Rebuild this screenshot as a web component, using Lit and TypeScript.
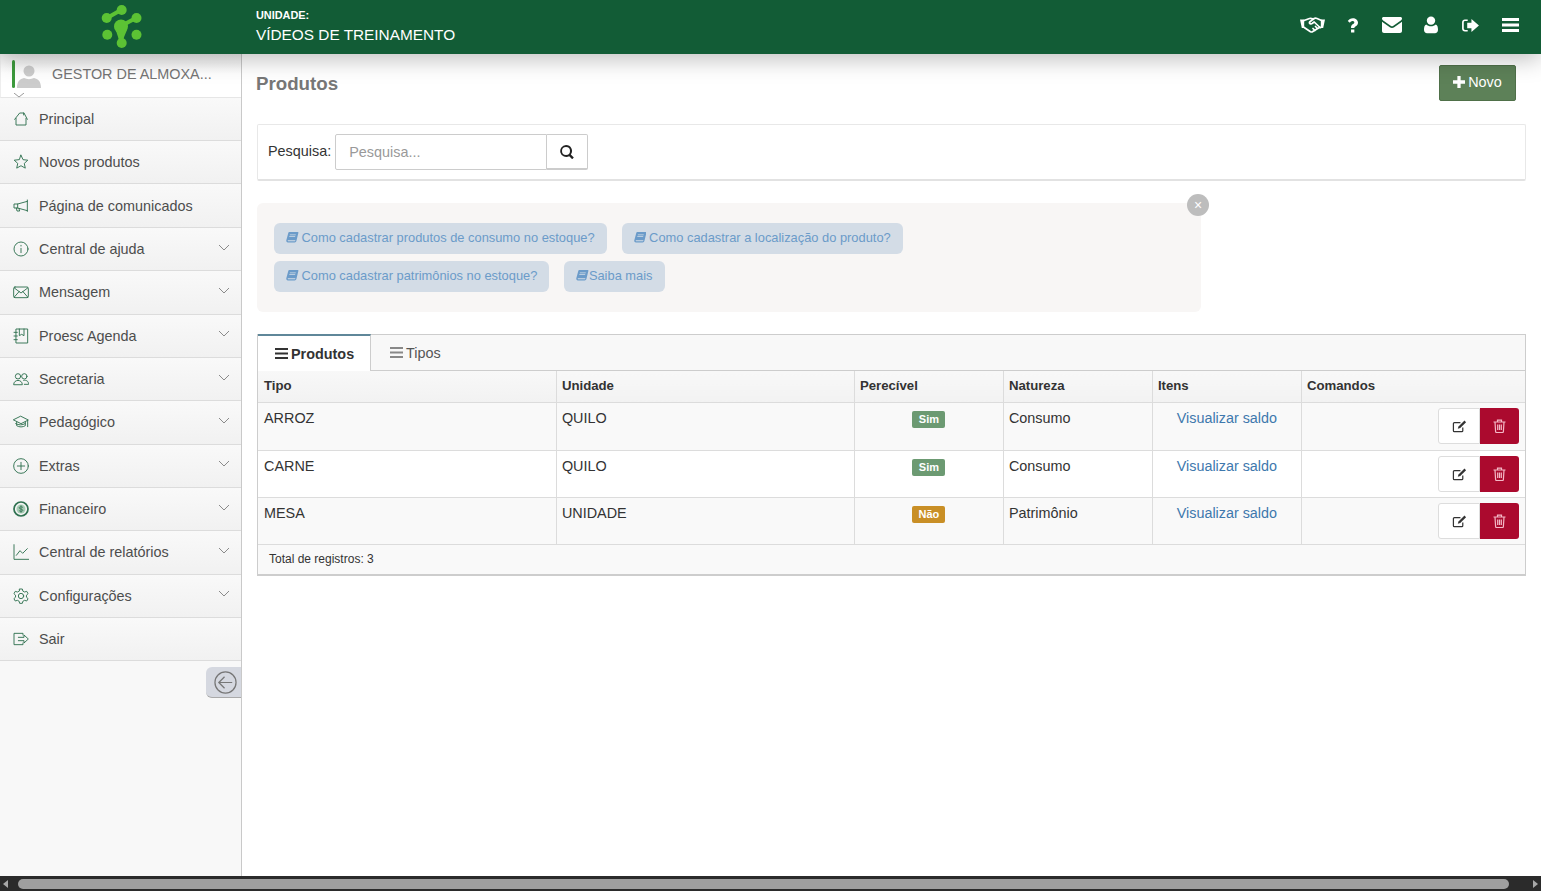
import { LitElement, html, css, svg } from "lit";
import { customElement } from "lit/decorators.js";

const ic = (body: unknown, vb = "0 0 24 24") => html`<svg class="i" viewBox=${vb} fill="none" stroke="currentColor" stroke-width="1.5" stroke-linecap="round" stroke-linejoin="round">${body}</svg>`;

const menu: [string, unknown, boolean][] = [
  ["Principal", svg`<path d="M4.500 11v10h15V11M2.500 12.500 10 3h6.500l5 9.500"/><path d="M16 3v3"/>`, false],
  ["Novos produtos", svg`<path d="m12 1.800 3 6.700 7.200.8-5.300 4.800 1.500 7.100L12 17.600l-6.400 3.600 1.500-7.100-5.300-4.800L9 8.500z"/>`, false],
  ["Página de comunicados", svg`<path d="M21.500 3v17M21.500 5 7 9H1.500v6H7l14.500 4M7 9v6M5 15l1 4.500h4L9 16"/>`, false],
  ["Central de ajuda", svg`<circle cx="12" cy="12" r="10.500"/><path d="M12 11v6.500M12 6.500v1"/>`, true],
  ["Mensagem", svg`<rect x="1" y="4.500" width="22" height="16" rx="2"/><path d="m2 6 10 7.500L22 6M2 19.500l7.500-8.500M22 19.500 14.500 11"/>`, true],
  ["Proesc Agenda", svg`<path d="M5 1.500h17v21H5zM1.500 6.500h5M1.500 12h5M1.500 17.500h5M9.500 1.500v10l3.500-2 3.500 2v-10"/>`, true],
  ["Secretaria", svg`<circle cx="7.500" cy="8" r="4"/><circle cx="17" cy="8" r="4"/><path d="M1 20c0-8 13-8 13 0zM16 14c4-1 7.500 1.500 7.500 6H17"/>`, true],
  ["Pedagógico", svg`<path d="m12 3.500 11 5.500-11 5.500L1 9zM5.500 12v5.500c3.500 2.500 9.500 2.500 13 0V12M22 10v9"/><path d="M4 14.500c4.500 2.500 10 2.500 14 0"/>`, true],
  ["Extras", svg`<circle cx="12" cy="12" r="11"/><path d="M12 6.500v11M6.500 12h11"/>`, true],
  ["Financeiro", svg`<circle cx="12" cy="12" r="10.500" stroke-width="2.600"/><circle cx="12" cy="12" r="6.800" fill="#a8ccb5" stroke="none"/><path d="M14.800 9.500c-1-1.300-5.600-1.300-5.600.8s5.600 1.500 5.600 3.600-4.600 2.100-5.600.7M12 7v10" stroke-width="1.200"/>`, true],
  ["Central de relatórios", svg`<path d="M1.500 1v22h22.500M5 17l5.500-7 4 4 7-7"/>`, true],
  ["Configurações", svg`<path d="M10 1.500h4l.800 3.200 2.600 1.300 3.200-1 2 3.500-2.400 2.300v3l2.400 2.200-2 3.500-3.200-1-2.600 1.400-.800 3.100h-4l-.800-3.100-2.600-1.400-3.200 1-2-3.500 2.400-2.200v-3L1.400 8.500l2-3.500 3.200 1 2.600-1.300z"/><circle cx="12" cy="12" r="4"/>`, true],
  ["Sair", svg`<path d="M15 6V3.500H1.500v17H15V18M8 9.500h8.500V6l6.500 6-6.500 6v-3.500H8"/>`, false],
];

const rows = [
  ["ARROZ", "QUILO", "Sim", "Consumo", 48],
  ["CARNE", "QUILO", "Sim", "Consumo", 47],
  ["MESA", "UNIDADE", "Não", "Patrimônio", 47],
];

const book = html`<svg class="book" viewBox="0 0 16 14"><path fill="currentColor" d="M4 0h11c.800 0 1 .500.800 1.200L13.300 11.500c-.300 1.200-1 1.800-2.300 1.800H2.500C1 13.300 0 12 .400 10.500L3 1C3.200.400 3.500 0 4 0zm1 3-.200 1h7.500l.300-1zm-.700 2.500-.200 1h7.500l.300-1zM2.300 10.500c-.300.800.100 1.300.800 1.300h8c.400 0 .700-.300.800-.700l.100-.600z" fill-rule="evenodd"/></svg>`;

const edit = html`<svg class="act" viewBox="0 0 16 14"><path fill="none" stroke="currentColor" stroke-width="1.300" d="M11.500 8.500V12a1 1 0 0 1-1 1h-8a1 1 0 0 1-1-1V4.500a1 1 0 0 1 1-1H9"/><path fill="currentColor" d="M13.300 1.200l1.700 1.700L8.800 9.200 6.200 10l.700-2.600z"/></svg>`;
const trash = html`<svg class="act" viewBox="0 0 14 14"><path fill="none" stroke="currentColor" stroke-width="1.200" d="M1 3h12M2.500 3l.600 9.500c0 .500.400 1 1 1h5.800c.600 0 1-.500 1-1l.600-9.500M5 3V1.200h4V3M5.200 5.500v5.500M7 5.500v5.500M8.800 5.500v5.500"/></svg>`;

@customElement("app-root")
export class AppRoot extends LitElement {
  static styles = css`
    :host { display: flex; flex-direction: column; height: 100vh; overflow: hidden; font-family: "Liberation Sans", Arial, sans-serif; font-size: 14.4px; color: #333; background: #fff; }
    * { box-sizing: border-box; }
    .top { height: 54px; flex: none; background: #125c36; color: #fff; display: flex; align-items: center; box-shadow: 0 4px 24px rgba(0,0,0,.28); position: relative; z-index: 2; }
    .logo { width: 242px; display: flex; justify-content: center; }
    .logo svg { width: 44px; height: 50px; }
    .unit { flex: 1; padding-left: 14px; }
    .unit small { display: block; font-size: 10.900px; font-weight: 700; line-height: 12px; margin-top: -3px; }
    .unit span { display: block; font-size: 15.360px; line-height: 17px; margin-top: 5px; }
    .tools { display: flex; align-items: center; padding-right: 11px; }
    .tool { width: 39.500px; display: flex; justify-content: center; align-items: center; height: 24px; margin-top: -4px; }
    .tool svg { display: block; fill: #fff; }
    .mid { flex: 1; display: flex; min-height: 0; }
    .side { width: 242px; flex: none; background: #f8f8f8; border-right: 1px solid #c9c9c9; display: flex; flex-direction: column; }
    .user { height: 43.800px; display: flex; align-items: center; padding: 0 0 3px 12px; background: linear-gradient(#f0f0f0, #fff 45%); border-left: 1px solid #eee; border-bottom: 1px solid #e6e6e6; position: relative; color: #757575; }
    .user .bar { width: 3px; height: 28px; background: #3d9a3d; border-radius: 2px; flex: none; margin-left: -1px; }
    .user svg.av { width: 24px; height: 24px; margin: 5px 0 0 2px; flex: none; }
    .user .nm { margin-left: 11px; white-space: nowrap; font-size: 14.400px; }
    .user svg.ch { position: absolute; left: 12px; top: 39px; width: 12px; height: 5px; color: #999; }
    .item { height: 43.350px; flex: none; display: flex; align-items: center; padding: 0 11px 0 13px; background: linear-gradient(#f9f9f9, #f1f1f1); border-bottom: 1px solid #dcdcdc; color: #4d4d4d; }
    .item .i { width: 16px; height: 16px; color: #2f7150; flex: none; stroke-width: 1.400; }
    .item .t { margin-left: 10px; flex: 1; }
    .item .cv { width: 12px; height: 7px; color: #8a8a8a; margin: -4px 0 0; }
    .coll { align-self: flex-end; margin-top: 6px; width: 35px; height: 31px; background: #d5d8e0; border-radius: 6px 0 0 6px; border-bottom: 1px solid #a9a9a9; display: flex; align-items: center; justify-content: center; color: #777; }
    .coll svg { width: 23px; height: 23px; margin-left: 4px; }
    .main { flex: 1; min-width: 0; padding: 0 15px; }
    .head { display: flex; justify-content: space-between; align-items: flex-start; padding-top: 11px; }
    h3 { margin: 8px 0 0 -1px; font-size: 18.720px; line-height: 21px; color: #777; font-weight: 700; }
    .novo { width: 77px; height: 36px; margin-right: 10px; background: #5d8158; border: 1px solid #4f7049; border-radius: 2px; color: #fff; display: flex; align-items: center; justify-content: center; gap: 3px; font-size: 14.400px; padding-bottom: 2px; }
    .novo svg { width: 12px; height: 12px; fill: #fff; }
    .search { margin-top: 23px; height: 57px; border: 1px solid #e8e8e8; border-bottom: 2px solid #e2e2e2; border-radius: 2px; display: flex; align-items: center; padding: 0 0 0 10px; }
    .search label { margin-right: 4px; margin-top: -2px; color: #333; }
    .search .inp { width: 212px; height: 36px; border: 1px solid #ccc; border-radius: 2px 0 0 2px; color: #999; display: flex; align-items: center; padding-left: 13px; }
    .search .go { width: 41px; height: 36px; border: 1px solid #ccc; border-left: none; border-bottom: 2px solid #ccc; border-radius: 0 2px 2px 0; display: flex; align-items: center; justify-content: center; }
    .go svg { width: 14px; height: 14px; fill: #222; }
    .alert { margin-top: 22px; width: 944px; height: 109px; background: #f8f6f5; border-radius: 6px; padding: 20px 17px; display: flex; flex-wrap: wrap; gap: 7px 15px; align-content: flex-start; position: relative; }
    .chip { height: 31px; background: #d3dce6; border-radius: 6px; padding: 0 12px 2px; display: flex; align-items: center; color: #6b9bc9; font-size: 12.870px; white-space: nowrap; }
    .chip .book { margin-right: 3px; }
    .chip.tight .book { margin-right: 0; }
    .book { width: 12.500px; height: 11px; }
    .close { position: absolute; right: -8px; top: -9px; width: 22px; height: 22px; border-radius: 50%; background: #bdbdbd; color: #fff; display: flex; align-items: center; justify-content: center; font-size: 14px; line-height: 1; }
    .tabs { margin-top: 22px; border: 1px solid #cdcdcd; border-bottom: 2px solid #cdcdcd; }
    .tabbar { height: 36px; display: flex; background: #f8f8f8; border-bottom: 1px solid #cdcdcd; }
    .tab { display: flex; align-items: center; gap: 3px; }
    .tab svg { width: 13px; height: 11px; fill: currentColor; }
    .tab.on { width: 113px; height: 37px; background: #fff; border-top: 2px solid #5f8799; border-right: 1px solid #cdcdcd; padding-left: 17px; font-weight: 700; margin-top: -1px; color: #333; }
    .tab.off { padding-left: 19px; color: #555; }
    .tab.off svg { fill: #888; }
    table { width: 100%; border-collapse: collapse; table-layout: fixed; }
    th { height: 31px; text-align: left; font-size: 13.200px; font-weight: 700; padding: 0 5px 2px; background: linear-gradient(#f8f8f8, #f2f2f2); border-right: 1px solid #dcdcdc; border-bottom: 1px solid #dcdcdc; color: #333; }
    td { vertical-align: top; padding: 7px 5px 0; border-right: 1px solid #dcdcdc; border-bottom: 1px solid #dcdcdc; color: #333; }
    th:first-child, td:first-child { padding-left: 6px; }
    th:last-child, td:last-child { border-right: none; }
    tr.odd td { background: #f9f9f9; }
    td.c { text-align: center; }
    .badge { display: inline-block; width: 33px; height: 17px; line-height: 17px; border-radius: 2px; color: #fff; font-size: 11px; font-weight: 700; text-align: center; background: #6c9a72; }
    .badge.n { background: #c98f26; }
    .link { display: block; text-align: center; color: #3e78ad; font-size: 14.350px; }
    .cmds { display: flex; justify-content: flex-end; margin: -2px 1px 0 0; }
    .b1 { width: 42px; height: 36px; background: #fff; border: 1px solid #ddd; border-radius: 3px 0 0 3px; display: flex; align-items: center; justify-content: center; color: #333; }
    .b2 { width: 39px; height: 36px; background: #ab0a2e; border-radius: 0 3px 3px 0; display: flex; align-items: center; justify-content: center; color: #f4b8c6; }
    .act { width: 15px; height: 14px; }
    .foot { height: 29px; background: #f9f9f9; display: flex; align-items: center; padding-left: 11px; font-size: 12px; color: #333; }
    .scroll { height: 15px; flex: none; background: #2b2b2b; display: flex; align-items: center; justify-content: space-between; padding: 0 3px; }
    .thumb { flex: 1; height: 10px; background: #9f9f9f; border-radius: 5px; margin: 0 24px 0 10px; }
    .arr { width: 0; height: 0; border-top: 4.500px solid transparent; border-bottom: 4.500px solid transparent; }
    .arr.l { border-right: 5px solid #a8a8a8; }
    .arr.r { border-left: 5px solid #a8a8a8; }
  `;

  render() {
    const bars = html`<svg viewBox="0 0 13 11"><path d="M0 0h13v2H0zM0 4.500h13v2H0zM0 9h13v2H0z"/></svg>`;
    return html`
      <div class="top">
        <div class="logo">
          <svg viewBox="0 0 44 50" fill="#5cc234" stroke="#5cc234">
            <path stroke-width="4" fill="none" d="M8 16 22 8M22 24 37 16"/>
            <path stroke="none" d="M17 26c-.500 5 3 8 3 15h4c0-7 4-10 4-15z"/>
            <circle cx="7.700" cy="16" r="5" stroke="none"/><circle cx="22.700" cy="8" r="5" stroke="none"/>
            <circle cx="37.500" cy="16" r="5" stroke="none"/><circle cx="22" cy="24.500" r="7" stroke="none"/>
            <circle cx="8.300" cy="32.700" r="5" stroke="none"/><circle cx="37.500" cy="32.700" r="5" stroke="none"/>
            <circle cx="22.700" cy="41" r="5" stroke="none"/>
          </svg>
        </div>
        <div class="unit"><small>UNIDADE:</small><span>VÍDEOS DE TREINAMENTO</span></div>
        <div class="tools">
          <div class="tool"><svg width="25" height="16" viewBox="0 0 25 16"><path d="M0 2.500h4.200v8.500H1.800zM25 2.500h-4.200v8.500h2.400z"/><path fill="none" stroke="#fff" stroke-width="1.700" stroke-linejoin="round" stroke-linecap="round" d="M4 3.500 9.500 1.500c1-.3 2-.2 3 .3l1 .6M21 3.300 17 1.500c-1-.4-2.300-.4-3.300.3L9.600 5c-.8 1.700 1.500 2.300 2.800 1.300l1.800-1.300 5.800 5.500M4.200 10.500 10.500 14.800c.8.300 1.700.200 2.300-.3L19 10.800c.8-.700 1.300-.700 1.800-.3M13 11.500l2 2M15.500 9.500l2 2"/></svg></div>
          <div class="tool"><svg width="11" height="15" viewBox="0 0 15 20"><path d="M5.500 19.500H10V15.500H5.500zM10 13.500c0-2 5-2.500 5-7.500C15 2.500 11.800 0 8 0 5 0 2.500 1.300 1 4l3 2.200C4.900 5 5.900 4 7.500 4c1.300 0 2.500.7 2.500 2 0 2-4.500 2.500-4.500 6.500v1z"/></svg></div>
          <div class="tool"><svg width="20" height="16" viewBox="0 0 20 16"><path d="M0 1.500C0 .7.700 0 1.500 0h17c.8 0 1.500.7 1.500 1.500 0 1-.7 1.700-1.500 2.300L11 9c-.6.400-1.400.400-2 0L1.500 3.800C.7 3.200 0 2.500 0 1.500z"/><path d="M0 4.800V14c0 1.100.9 2 2 2h16c1.100 0 2-.9 2-2V4.800l-7.800 5.500c-1.300 1-3.100 1-4.400 0z"/></svg></div>
          <div class="tool"><svg width="14" height="18" viewBox="0 0 16 20"><circle cx="8" cy="5" r="4.800"/><path d="M2.500 9.500C4 11 5.800 11.500 8 11.500s4-.5 5.500-2C15.300 10 16 12.500 16 15.500c0 2.500-1.500 4-3.500 4h-9C1.500 19.500 0 18 0 15.500c0-3 .7-5.500 2.500-6z"/></svg></div>
          <div class="tool"><svg width="17" height="15" viewBox="0 0 18 16"><path d="M6 1.500H3C1.300 1.500 0 2.800 0 4.500v7c0 1.700 1.300 3 3 3h3v-1.800H3.200c-.8 0-1.400-.6-1.400-1.400V4.700c0-.8.600-1.400 1.400-1.400H6zM10 1v4H5.500v6H10v4l8-7z"/></svg></div>
          <div class="tool"><svg width="17" height="14" viewBox="0 0 17 14"><path d="M0 0h17v3H0zM0 5.500h17v3H0zM0 11h17v3H0z"/></svg></div>
        </div>
      </div>
      <div class="mid">
        <div class="side">
          <div class="user">
            <span class="bar"></span>
            <svg class="av" viewBox="0 0 24 24" fill="#ccc"><circle cx="12" cy="7" r="5.500"/><path d="M0 24c0-7 3-9 7-10 3 1.500 7 1.500 10 0 4 1 7 3 7 10z"/></svg>
            <span class="nm">GESTOR DE ALMOXA...</span>
            <svg class="ch" viewBox="0 0 12 5" fill="none" stroke="currentColor"><path d="m1 0 5 4 5-4"/></svg>
          </div>
          ${menu.map(([t, p, c]) => html`<div class="item">${ic(p)}<span class="t">${t}</span>${c ? html`<svg class="cv" viewBox="0 0 12 7" fill="none" stroke="currentColor"><path d="m1 1 5 5 5-5"/></svg>` : null}</div>`)}
          <div class="coll"><svg viewBox="0 0 24 24" fill="none" stroke="currentColor" stroke-width="1.300"><circle cx="12" cy="12" r="11"/><path d="M19 12H5M11 6l-6 6 6 6"/></svg></div>
        </div>
        <div class="main">
          <div class="head">
            <h3>Produtos</h3>
            <div class="novo"><svg viewBox="0 0 11 11"><path d="M4 0h3v4h4v3H7v4H4V7H0V4h4z"/></svg>Novo</div>
          </div>
          <div class="search">
            <label>Pesquisa:</label>
            <div class="inp">Pesquisa...</div>
            <div class="go"><svg viewBox="0 0 14 14"><path fill-rule="evenodd" d="M6 0a6 6 0 0 1 4.800 9.600l3 3-1.600 1.600-3-3A6 6 0 1 1 6 0zm0 2a4 4 0 1 0 0 8 4 4 0 0 0 0-8z"/></svg></div>
          </div>
          <div class="alert">
            <div class="chip">${book}Como cadastrar produtos de consumo no estoque?</div>
            <div class="chip">${book}Como cadastrar a localização do produto?</div>
            <div class="chip">${book}Como cadastrar patrimônios no estoque?</div>
            <div class="chip tight">${book}Saiba mais</div>
            <div class="close">×</div>
          </div>
          <div class="tabs">
            <div class="tabbar">
              <div class="tab on">${bars}Produtos</div>
              <div class="tab off">${bars}Tipos</div>
            </div>
            <table>
              <colgroup><col style="width:298.400px"/><col style="width:298px"/><col style="width:149px"/><col style="width:149px"/><col style="width:149px"/><col/></colgroup>
              <tr><th>Tipo</th><th>Unidade</th><th>Perecível</th><th>Natureza</th><th>Itens</th><th>Comandos</th></tr>
              ${rows.map((r, i) => html`<tr class=${i % 2 ? "" : "odd"} style="height:${r[4]}px">
                <td>${r[0]}</td><td>${r[1]}</td>
                <td class="c"><span class="badge ${r[2] === "Não" ? "n" : ""}">${r[2]}</span></td>
                <td>${r[3]}</td><td><span class="link">Visualizar saldo</span></td>
                <td><div class="cmds"><div class="b1">${edit}</div><div class="b2">${trash}</div></div></td>
              </tr>`)}
            </table>
            <div class="foot">Total de registros: 3</div>
          </div>
        </div>
      </div>
      <div class="scroll"><span class="arr l"></span><div class="thumb"></div><span class="arr r"></span></div>
    `;
  }
}
